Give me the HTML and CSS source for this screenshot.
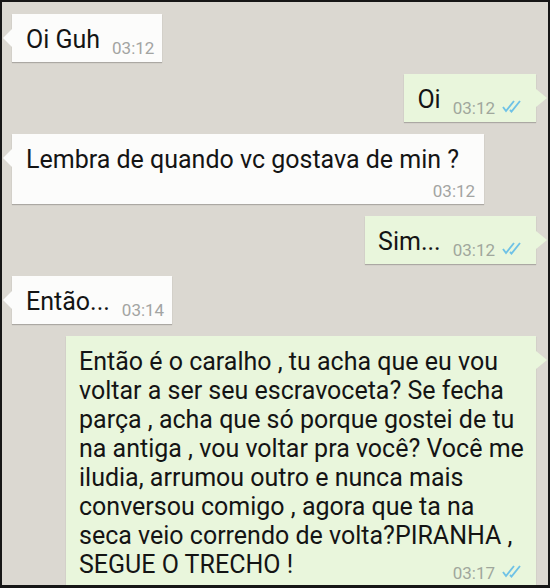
FILE: index.html
```html
<!DOCTYPE html>
<html>
<head>
	<meta http-equiv="Content-Type" content="text/html; charset=UTF-8"/>
	<title>Conversa</title>
	<link rel="stylesheet" href="styles.css">
</head>
<body>

<div class="chat">

	<div class="msg in">
		Oi Guh<span class="time">03:12</span>
	</div>

	<div class="msg out">
		Oi<span class="time">03:12</span><svg class="ticks" viewBox="0 0 24 14"><path d="M1 8 L4 12 L12 2 M8 11 L9.5 12.5 L18 2"/></svg>
	</div>

	<div class="msg in wide">
		<p class="text">Lembra de quando vc gostava de min ?</p>
		<p class="time-row"><span class="time">03:12</span></p>
	</div>

	<div class="msg out">
		Sim...<span class="time">03:12</span><svg class="ticks" viewBox="0 0 24 14"><path d="M1 8 L4 12 L12 2 M8 11 L9.5 12.5 L18 2"/></svg>
	</div>

	<div class="msg in">
		Então...<span class="time">03:14</span>
	</div>

	<div class="msg out long">
		<p class="text">Então é o caralho , tu acha que eu vou<br>voltar a ser seu escravoceta? Se fecha<br>parça , acha que só porque gostei de tu<br>na antiga , vou voltar pra você? Você me<br>iludia, arrumou outro e nunca mais<br>conversou comigo , agora que ta na<br>seca veio correndo de volta?PIRANHA ,</p>
		<div class="last-line">
			<span>SEGUE O TRECHO !</span>
			<span><span class="time">03:17</span><svg class="ticks" viewBox="0 0 24 14"><path d="M1 8 L4 12 L12 2 M8 11 L9.5 12.5 L18 2"/></svg></span>
		</div>
	</div>

</div>

</body>
</html>
```

FILE: styles.css
```css
html, body {
	margin: 0;
	padding: 0;
	background: #161616;
}

.chat {
	margin: 2px 2px 0 2px;
	height: 583px;
	box-sizing: border-box;
	padding: 12px 12px 0 10px;
	background: #dbd8d1;
	display: flex;
	flex-direction: column;
	align-items: flex-start;
	gap: 12px;
	font-family: Roboto, "Liberation Sans", sans-serif;
	font-size: 25px;
	line-height: 29px;
	color: #141414;
}

/* bubbles */
.msg {
	position: relative;
	padding: 11px 8px 8px 14px;
	background: #fcfcfb;
	box-shadow: 0 1px 1px rgba(0, 0, 0, 0.22);
	white-space: nowrap;
}

.msg.out {
	align-self: flex-end;
	background: #e9f6dc;
	padding: 11px 10px 8px 13px;
}

/* little tails */
.msg::before {
	content: "";
	position: absolute;
	top: 15px;
	border-style: solid;
}

.msg.in::before {
	left: -9px;
	border-width: 9px 9px 9px 0;
	border-color: transparent #fcfcfb transparent transparent;
}

.msg.out::before {
	right: -11px;
	border-width: 9px 0 9px 11px;
	border-color: transparent transparent transparent #e9f6dc;
}

p {
	margin: 0;
}

/* 03:12 */
.time {
	font-size: 17px;
	line-height: 0;
	color: #a3a4a2;
	margin-left: 12px;
	vertical-align: -6px;
}

.out .time {
	color: #a0a79c;
}

.ticks {
	width: 24px;
	height: 14px;
	margin-left: 7px;
	vertical-align: -5px;
	fill: none;
	stroke: #6fc2e6;
	stroke-width: 1.9;
}

.wide {
	padding-right: 9px;
}

.wide .text {
	margin-right: 16px;
}

.time-row {
	text-align: right;
	line-height: 22px;
	margin-top: 4px;
	margin-bottom: -4px;
}

.time-row .time {
	vertical-align: 0;
}

/* long one */
.long {
	width: 470px;
	box-sizing: border-box;
	padding: 10px 10px 4px 13px;
}

.long .text,
.last-line {
	line-height: 29px;
}

.last-line {
	display: flex;
	justify-content: space-between;
}
```
